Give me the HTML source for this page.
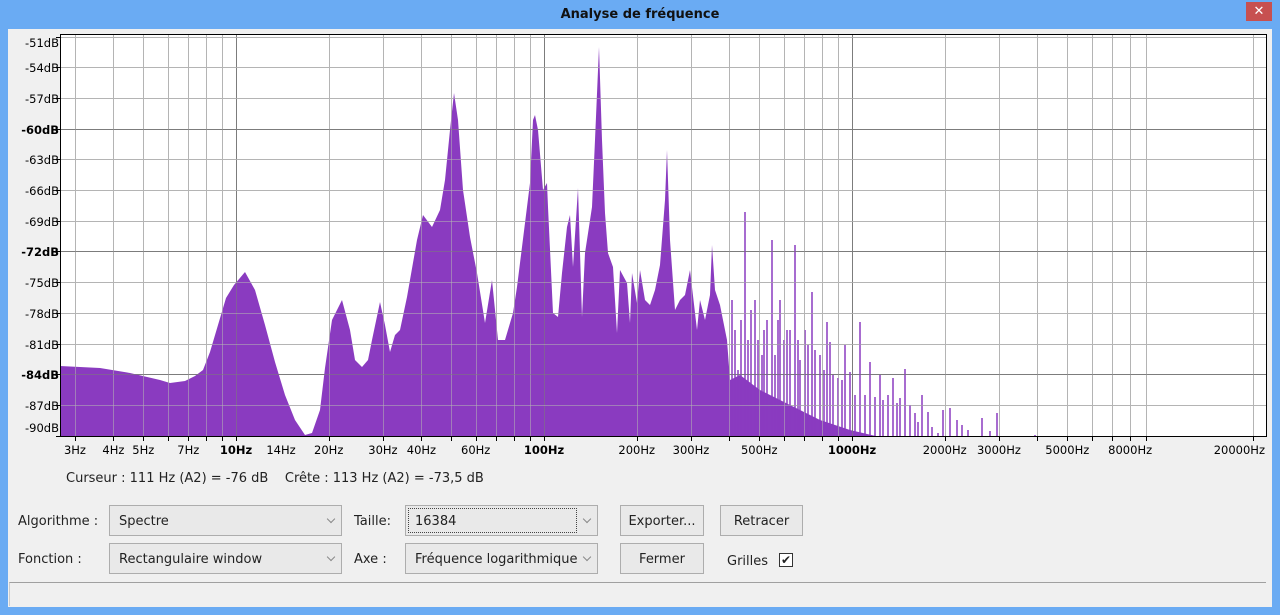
<!DOCTYPE html>
<html><head><meta charset="utf-8"><style>
*{margin:0;padding:0;box-sizing:border-box}
body{width:1280px;height:615px;background:#6aabf3;position:relative;overflow:hidden;font-family:"DejaVu Sans","Liberation Sans",sans-serif;font-size:13px;color:#222}
.title{position:absolute;left:0;top:0;width:1280px;height:29px;text-align:center;line-height:30px;font-weight:bold;font-size:13px;color:#111}
.close{position:absolute;left:1246px;top:2px;width:26px;height:19px;background:#c75050;color:#fff;text-align:center;line-height:19px;font-size:13px;font-weight:bold}
.client{position:absolute;left:8px;top:29px;width:1264px;height:578px;background:#f0f0f0}
.a{position:absolute;white-space:nowrap}
.combo{position:absolute;border:1px solid #adadad;background:#e9e9e9;height:31px;line-height:31px;padding-left:9px;color:#222}
.combo:after{content:"";position:absolute;right:7px;top:10px;width:5px;height:5px;border-right:1.5px solid #888;border-bottom:1.5px solid #888;transform:rotate(45deg)}
.btn{position:absolute;border:1px solid #adadad;background:#e9e9e9;height:31px;line-height:31px;text-align:center;color:#222}
</style></head><body>
<div class="title">Analyse de fréquence</div>
<div class="close">✕</div>
<div class="client"></div>
<svg id="s" width="1280" height="615" style="position:absolute;left:0;top:0" font-family="DejaVu Sans, Liberation Sans, sans-serif" font-size="11.5">
<rect x="60" y="34" width="1207" height="403" fill="#fff"/>
<g id="grid"></g>
<polygon fill="#8a3bc0" points="60,437 60,366 100,368 130,373 160,380 170,383 185,381 195,376 203,370 210,352 218,325 226,298 234,285 245,272 255,290 265,325 275,362 285,395 295,420 305,435 312,433 320,410 325,368 332,320 342,300 350,330 355,360 362,367 368,360 372,340 380,302 385,325 390,352 395,335 400,330 407,297 417,240 423,215 432,227 440,210 445,180 450,130 454,93 458,120 463,190 470,237 477,273 485,323 492,280 497,330 498,340 505,340 513,313 517,287 525,223 530,183 533,120 535,115 538,130 543,190 547,183 548,207 553,313 558,317 562,273 567,227 570,215 573,267 578,188 582,317 585,253 592,207 595,140 599,47 602,140 605,213 608,253 613,267 617,333 620,270 627,283 630,323 632,273 637,303 640,270 645,300 650,305 655,290 660,265 665,200 667,150 670,240 675,310 680,300 685,295 690,270 697,330 700,300 705,320 710,295 712,245 715,290 720,305 727,340 730,380 740,375 760,390 790,405 820,420 850,430 880,437"/>
<g id="spk" stroke="#8a3bc0" stroke-width="1.5"></g>
<g id="grid2"></g>
<rect x="60.5" y="34.5" width="1206" height="402" fill="none" stroke="#000"/>
<g id="lab"></g>
</svg>
<div class="a" style="left:66px;top:471px">Curseur : 111 Hz (A2) = -76 dB&nbsp;&nbsp;&nbsp; Crête : 113 Hz (A2) = -73,5 dB</div>
<div class="a" style="left:18px;top:514px">Algorithme :</div>
<div class="combo" style="left:109px;top:505px;width:233px">Spectre</div>
<div class="a" style="left:354px;top:514px">Taille:</div>
<div class="combo" style="left:405px;top:505px;width:193px"><span style="position:absolute;left:2px;top:2px;width:169px;height:25px;border:1px dotted #444"></span>16384</div>
<div class="btn" style="left:620px;top:505px;width:84px">Exporter...</div>
<div class="btn" style="left:720px;top:505px;width:83px">Retracer</div>
<div class="a" style="left:18px;top:552px">Fonction :</div>
<div class="combo" style="left:109px;top:543px;width:233px">Rectangulaire window</div>
<div class="a" style="left:354px;top:552px">Axe :</div>
<div class="combo" style="left:405px;top:543px;width:193px">Fréquence logarithmique</div>
<div class="btn" style="left:620px;top:543px;width:84px">Fermer</div>
<div class="a" style="left:727px;top:554px">Grilles</div>
<div class="a" style="left:779px;top:553px;width:14px;height:14px;border:1px solid #333;background:#fff;font-size:12px;line-height:12px;text-align:center">✔</div>
<div class="a" style="left:9px;top:582px;width:1257px;height:24px;border-top:1px solid #a0a0a0;border-left:1px solid #ccc;background:#f0f0f0"></div>
<script>
var ns="http://www.w3.org/2000/svg";
function el(p,t,a,txt){var e=document.createElementNS(ns,t);for(var k in a)e.setAttribute(k,a[k]);if(txt)e.textContent=txt;document.getElementById(p).appendChild(e);return e;}
function fx(f){return 236+308*Math.log10(f/10);}
var fs=[];for(var d=1;d<=1000;d*=10)for(var m=1;m<10;m++){var f=m*d;if(f>=3)fs.push(f);}fs.push(20000);
fs.forEach(function(f){var x=Math.round(fx(f))+0.5;var maj=(f==10||f==100||f==1000);
["grid","grid2"].forEach(function(g){el(g,"line",{x1:x,y1:35,x2:x,y2:437,stroke:maj?"#7c7c7c":"#b4b4b4","stroke-width":1,opacity:g=="grid2"?0.55:1});});
el("lab","line",{x1:x,y1:437,x2:x,y2:441,stroke:"#000"});});
for(var i=0;i<=13;i++){var db=-51-3*i;var y=Math.round(36.5+i*30.7)+0.5;var maj=(db==-60||db==-72||db==-84);
["grid","grid2"].forEach(function(g){el(g,"line",{x1:60,y1:y,x2:1267,y2:y,stroke:maj?"#7c7c7c":"#b4b4b4",opacity:g=="grid2"?0.55:1});});
el("lab","line",{x1:56,y1:y,x2:60,y2:y,stroke:"#000"});
var ty=Math.min(y+4.5,432);if(i==0)ty=47;
var t=el("lab","text",{x:59,y:ty,"text-anchor":"end","font-weight":maj?"bold":"normal"},db+"dB");}
var L=[[3,"3Hz"],[4,"4Hz"],[5,"5Hz"],[7,"7Hz"],[10,"10Hz",1],[14,"14Hz"],[20,"20Hz"],[30,"30Hz"],[40,"40Hz"],[60,"60Hz"],[100,"100Hz",1],[200,"200Hz"],[300,"300Hz"],[500,"500Hz"],[1000,"1000Hz",1],[2000,"2000Hz"],[3000,"3000Hz"],[5000,"5000Hz"],[8000,"8000Hz"]];
L.forEach(function(l){el("lab","text",{x:fx(l[0]),y:454,"text-anchor":"middle","font-weight":l[2]?"bold":"normal"},l[1]);});
el("lab","text",{x:1265,y:454,"text-anchor":"end"},"20000Hz");
var S=[[732,300],[735,330],[738,370],[741,320],[745,212],[748,340],[751,310],[755,300],[758,340],[762,355],[764,330],[767,320],[772,240],[775,355],[778,320],[780,300],[784,340],[787,330],[790,330],[795,245],[798,340],[800,360],[805,330],[808,345],[812,292],[815,350],[820,355],[824,370],[827,322],[830,342],[833,375],[838,378],[842,380],[845,345],[850,372],[855,395],[860,322],[865,395],[870,362],[875,397],[880,375],[883,400],[888,395],[893,378],[897,403],[900,398],[905,369],[910,405],[915,413],[918,422],[922,395],[928,412],[932,427],[938,433],[943,410],[950,408],[957,420],[962,425],[968,430],[975,436],[982,418],[990,431],[997,413],[1035,435]];
S.forEach(function(s){el("spk","line",{x1:s[0],y1:s[1],x2:s[0],y2:437});});
</script>
</body></html>
